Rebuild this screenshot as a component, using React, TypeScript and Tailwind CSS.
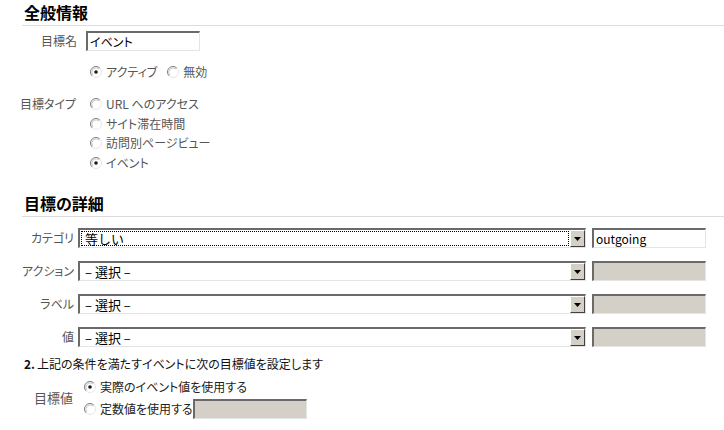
import React from 'react';

const FONT = "'Noto Sans CJK JP', 'Liberation Sans', sans-serif";

const Radio = ({ checked }: { checked?: boolean }) => (
  <svg width="12" height="12" viewBox="0 0 12 12" className="shrink-0">
    <circle cx="6" cy="6" r="5.5" fill="#fff" />
    <path d="M2.1 9.9 A5.5 5.5 0 0 1 9.9 2.1" fill="none" stroke="#7f7f7f" strokeWidth="1" />
    <path d="M9.9 2.1 A5.5 5.5 0 0 1 2.1 9.9" fill="none" stroke="#e6e6e6" strokeWidth="1" />
    <path d="M2.9 9.1 A4.4 4.4 0 0 1 9.1 2.9" fill="none" stroke="#c8c8c8" strokeWidth="1" />
    {checked && <circle cx="6" cy="6" r="1.8" fill="#1a1a1a" />}
  </svg>
);

const RadioItem = ({ label, checked }: { label: string; checked?: boolean }) => (
  <div className="flex items-center gap-[4px]">
    <Radio checked={checked} />
    <span>{label}</span>
  </div>
);

const Select = ({ value, focused }: { value: string; focused?: boolean }) => (
  <div className="flex h-[20px] w-[508px] border-t-2 border-l-2 border-b border-r border-t-[#6a6a6a] border-l-[#6a6a6a] border-b-[#e4e4e4] border-r-[#e4e4e4] bg-white">
    <div className="flex flex-1 items-center p-[1px]">
      <div
        className={`flex h-full flex-1 items-center pl-[3px] text-[13px] text-black ${
          focused ? 'border border-dotted border-black' : 'border border-transparent'
        }`}
        style={{ fontFeatureSettings: 'normal' }}
      >
        {value}
      </div>
    </div>
    <div className="flex w-[15px] items-center justify-center border border-t-white border-l-white border-b-[#404040] border-r-[#404040] bg-[#d4d0c8]">
      <svg width="7" height="4" viewBox="0 0 7 4">
        <path d="M0 0 H7 L3.5 4 Z" fill="#000" />
      </svg>
    </div>
  </div>
);

const TextBox = ({ value, disabled }: { value?: string; disabled?: boolean }) => (
  <div
    className={`flex h-[20px] w-[114px] items-center border-t-2 border-l-2 border-b border-r border-t-[#6a6a6a] border-l-[#6a6a6a] border-b-[#e4e4e4] border-r-[#e4e4e4] pl-[2px] text-black ${
      disabled ? 'bg-[#d4d0c8]' : 'bg-white'
    }`}
  >
    <span className="text-[12px]">{value}</span>
  </div>
);

const Heading = ({ children }: { children: React.ReactNode }) => (
  <div className="ml-[22px] h-[26px] border-b border-[#dcdcdc] pl-[2px] pt-[2px] text-[16px] font-bold leading-[21px] text-black">
    {children}
  </div>
);

export default function App() {
  const rows = [
    { label: 'カテゴリ', value: '等しい', focused: true, input: 'outgoing' },
    { label: 'アクション', value: '– 選択 –' },
    { label: 'ラベル', value: '– 選択 –' },
    { label: '値', value: '– 選択 –' },
  ];

  return (
    <div
      className="h-[430px] w-[724px] overflow-hidden bg-white text-[12px] leading-[16px] text-[#555]"
      style={{ fontFamily: FONT, fontFeatureSettings: "'palt'" }}
    >
      <Heading>全般情報</Heading>

      {/* goal name */}
      <div className="mt-[5px] flex items-center">
        <div className="w-[77px] text-right">目標名</div>
        <div className="ml-[9px]">
          <TextBox value="イベント" />
        </div>
      </div>

      {/* active */}
      <div className="mt-[11px] flex h-[20px] items-center gap-[10px] pl-[90px]">
        <RadioItem label="アクティブ" checked />
        <RadioItem label="無効" />
      </div>

      {/* goal type */}
      <div className="mt-[12px] flex">
        <div className="flex h-[20px] w-[76px] items-center justify-end">目標タイプ</div>
        <div className="ml-[14px] flex flex-col">
          <div className="flex h-[20px] items-center"><RadioItem label="URL へのアクセス" /></div>
          <div className="flex h-[19px] items-center"><RadioItem label="サイト滞在時間" /></div>
          <div className="flex h-[20px] items-center"><RadioItem label="訪問別ページビュー" /></div>
          <div className="flex h-[20px] items-center"><RadioItem label="イベント" checked /></div>
        </div>
      </div>

      <div className="mt-[18px]">
        <Heading>目標の詳細</Heading>
      </div>

      <div className="mt-[11px] flex flex-col gap-[13px]">
        {rows.map((r) => (
          <div key={r.label} className="flex items-center">
            <div className="w-[74px] text-right">{r.label}</div>
            <div className="ml-[4px]">
              <Select value={r.value} focused={r.focused} />
            </div>
            <div className="ml-[6px]">
              <TextBox value={r.input} disabled={!r.input} />
            </div>
          </div>
        ))}
      </div>

      <div className="mt-[7px] flex h-[20px] items-center pl-[24px] text-[#111]">
        <span className="font-bold">2.</span>
        <span className="ml-[2px]">上記の条件を満たすイベントに次の目標値を設定します</span>
      </div>

      <div className="mt-[2px] flex items-center text-[#222]">
        <div className="w-[73px] text-right text-[13px] text-[#555]">目標値</div>
        <div className="ml-[11px] flex flex-col">
          <div className="flex h-[22px] items-center"><RadioItem label="実際のイベント値を使用する" checked /></div>
          <div className="flex h-[22px] items-center">
            <RadioItem label="定数値を使用する" />
            <TextBox disabled />
          </div>
        </div>
      </div>
    </div>
  );
}
